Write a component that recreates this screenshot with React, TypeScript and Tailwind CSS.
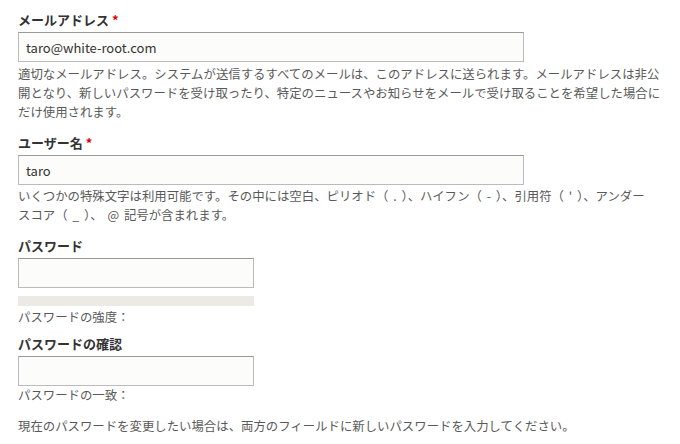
const font = { fontFamily: '"Noto Sans CJK JP", "Noto Sans", sans-serif' };

const Label = ({ text, required }: { text: string; required?: boolean }) => (
  <label className="block text-[13px] leading-[18px] font-bold text-[#333]">
    {text}
    {required && <span className="ml-[3px] text-[#e00000]">*</span>}
  </label>
);

const Input = ({ value, wide }: { value?: string; wide?: boolean }) => (
  <input
    type="text"
    defaultValue={value}
    className={`mt-[3px] block h-[30px] ${wide ? 'w-[506px]' : 'w-[236px]'} border border-[#bbb] border-t-[#999] bg-[#fcfcfa] px-[7px] text-[13px] text-[#333] outline-none`}
  />
);

const Desc = ({
  children,
  className = '',
  width = 'w-[648px]',
}: {
  children: React.ReactNode;
  className?: string;
  width?: string;
}) => (
  <div className={`${width} text-[12.4px] leading-[19px] text-[#595959] ${className}`}>{children}</div>
);

export default function App() {
  return (
    <div className="bg-white min-h-[444px] pl-[18px] pt-[11px]" style={font}>
      <div>
        <Label text="メールアドレス" required />
        <Input value="taro@white-root.com" wide />
        <Desc className="mt-[3px]">
          適切なメールアドレス。システムが送信するすべてのメールは、このアドレスに送られます。メールアドレスは非公開となり、新しいパスワードを受け取ったり、特定のニュースやお知らせをメールで受け取ることを希望した場合にだけ使用されます。
        </Desc>
      </div>

      <div className="mt-[12px]">
        <Label text="ユーザー名" required />
        <Input value="taro" wide />
        <Desc className="mt-[2px] [word-spacing:2px]" width="w-[636px]">
          いくつかの特殊文字は利用可能です。その中には空白、ピリオド（ . ）、ハイフン（ - ）、引用符（ ' ）、アンダースコア（ _ ）、 @ 記号が含まれます。
        </Desc>
      </div>

      <div className="mt-[12px]">
        <Label text="パスワード" />
        <Input />
        <div className="mt-[8px] h-[10px] w-[236px] bg-[#ebeae4]" />
        <Desc className="mt-[2px]">パスワードの強度：</Desc>
      </div>

      <div className="mt-[8px]">
        <Label text="パスワードの確認" />
        <Input />
        <Desc>パスワードの一致：</Desc>
      </div>

      <Desc className="mt-[12px]">
        現在のパスワードを変更したい場合は、両方のフィールドに新しいパスワードを入力してください。
      </Desc>
    </div>
  );
}
